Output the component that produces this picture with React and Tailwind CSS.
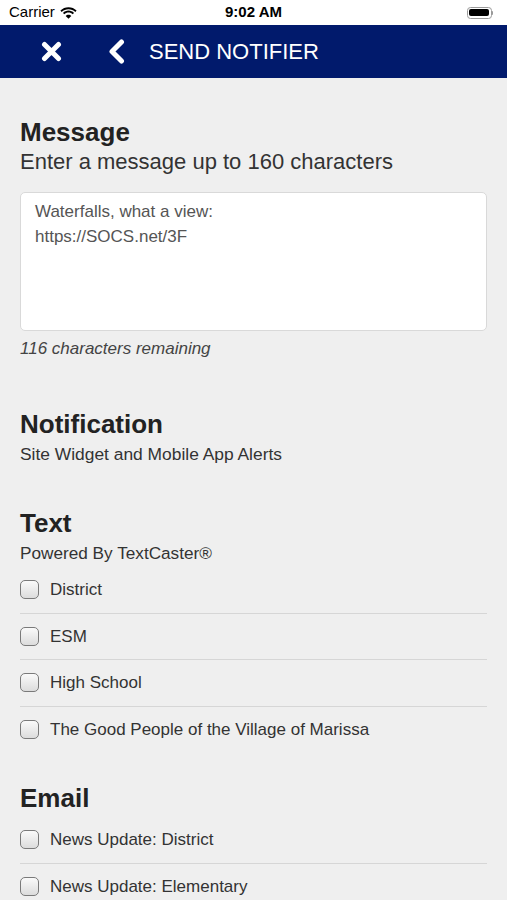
import React from 'react';

const textGroups = ['District', 'ESM', 'High School', 'The Good People of the Village of Marissa'];
const emailGroups = ['News Update: District', 'News Update: Elementary'];

const StatusBar = () => (
  <div className="h-[25px] bg-white flex items-center justify-between px-[9px] text-[15px] text-black">
    <div className="flex items-center gap-[5px] w-[120px]">
      <span>Carrier</span>
      <svg width="17" height="12" viewBox="0 0 17 12">
        <path d="M8.5 2.2c2.6 0 5 1 6.8 2.7l1.3-1.4C14.4 1.4 11.6.2 8.5.2S2.6 1.4.4 3.5l1.3 1.4C3.5 3.2 5.9 2.2 8.5 2.2z" fill="#000" />
        <path d="M8.5 5.6c1.6 0 3.1.6 4.2 1.7l1.3-1.4C12.6 4.5 10.6 3.6 8.5 3.6S4.4 4.5 3 5.9l1.3 1.4c1.1-1.1 2.6-1.7 4.2-1.7z" fill="#000" />
        <path d="M8.5 11.8l2.8-2.9c-.7-.7-1.7-1.2-2.8-1.2s-2.1.5-2.8 1.2z" fill="#000" />
      </svg>
    </div>
    <span className="font-semibold">9:02 AM</span>
    <div className="w-[120px] flex justify-end pr-[5px]">
      <div className="flex items-center">
        <div className="w-[25px] h-[12px] rounded-[3.5px] border border-[#9a9a9a] p-[1.5px]">
          <div className="w-full h-full rounded-[2px] bg-black" />
        </div>
        <div className="w-[1.5px] h-[4px] bg-[#9a9a9a] rounded-r-sm" />
      </div>
    </div>
  </div>
);

const NavBar = () => (
  <div className="h-[53px] bg-[#011a6c] flex items-center text-white">
    <svg className="ml-[41px]" width="21" height="21" viewBox="0 0 21 21">
      <path d="M3.5 3.5l14 14M17.5 3.5l-14 14" stroke="#fff" strokeWidth="5" strokeLinecap="round" />
    </svg>
    <svg className="ml-[46px]" width="17" height="25" viewBox="0 0 17 25">
      <path d="M13.5 3L4 12.5 13.5 22" stroke="#fff" strokeWidth="5" strokeLinecap="round" strokeLinejoin="round" fill="none" />
    </svg>
    <span className="ml-[24px] text-[22px]">SEND NOTIFIER</span>
  </div>
);

const Checkbox = () => (
  <span className="w-[19px] h-[19px] rounded-[5px] border-[1.5px] border-[#7a7a7a] bg-gradient-to-b from-[#fafafa] to-[#dcdcdc] shrink-0" />
);

const CheckRow = ({ label, last }) => (
  <div className={`flex items-center gap-[11px] h-[46.5px] ${last ? '' : 'border-b border-[#d6d6d6]'}`}>
    <Checkbox />
    <span className="text-[17px] text-[#333]">{label}</span>
  </div>
);

export default function App() {
  return (
    <div className="min-h-screen bg-[#efefef] font-['Liberation_Sans',Arial,sans-serif]">
      <StatusBar />
      <NavBar />
      <div className="px-[20px] pt-[39px]">
        <h2 className="text-[26px] font-bold text-[#222] leading-[30px]">Message</h2>
        <p className="text-[22px] text-[#333] leading-[28px] mt-[1px]">Enter a message up to 160 characters</p>
        <div className="mt-[16px] h-[139px] bg-white border-[1.5px] border-[#d9d9d9] rounded-[5px] px-[14px] pt-[6px] text-[17px] leading-[25px] text-[#555]">
          <div>Waterfalls, what a view:</div>
          <div>https://SOCS.net/3F</div>
        </div>
        <p className="mt-[7px] text-[17px] italic text-[#444] leading-[22px]">116 characters remaining</p>

        <h2 className="mt-[49px] text-[26px] font-bold text-[#222] leading-[30px]">Notification</h2>
        <p className="text-[17.4px] text-[#333] leading-[24px] mt-[3px]">Site Widget and Mobile App Alerts</p>

        <h2 className="mt-[42px] text-[26px] font-bold text-[#222] leading-[30px]">Text</h2>
        <p className="text-[17.2px] text-[#333] leading-[24px] mt-[3px]">Powered By TextCaster®</p>
        <div className="mt-[2px]">
          {textGroups.map((g, i) => (
            <CheckRow key={g} label={g} last={i === textGroups.length - 1} />
          ))}
        </div>

        <h2 className="mt-[30px] text-[26px] font-bold text-[#222] leading-[30px]">Email</h2>
        <div className="mt-[4px]">
          {emailGroups.map((g, i) => (
            <CheckRow key={g} label={g} last={i === emailGroups.length - 1} />
          ))}
        </div>
      </div>
    </div>
  );
}
